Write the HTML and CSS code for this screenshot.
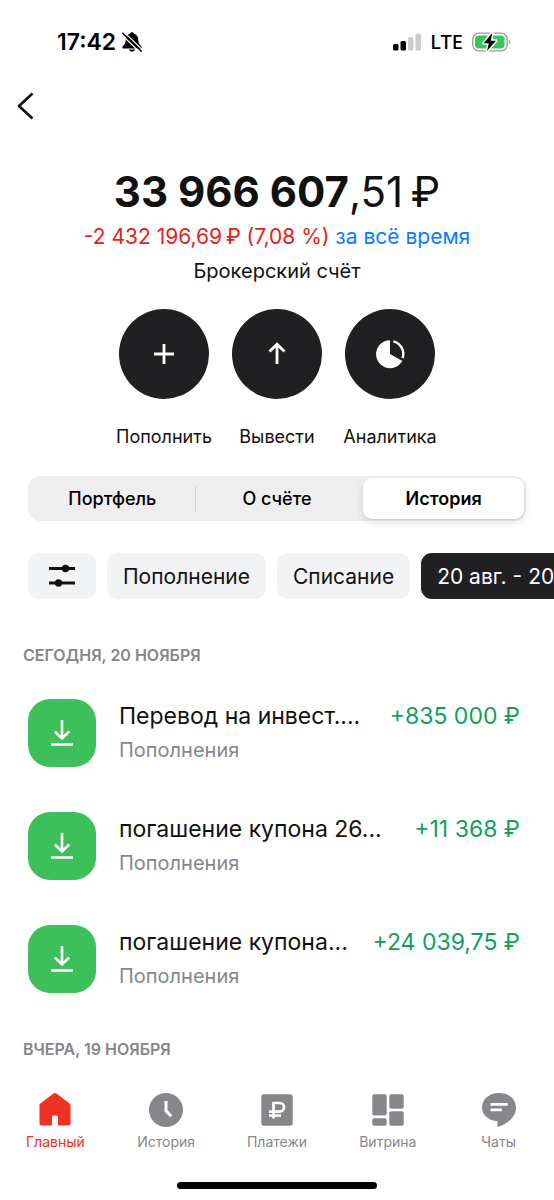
FILE: index.html
```html
<!DOCTYPE html>
<html lang="ru">
<head>
<meta charset="utf-8">
<meta name="viewport" content="width=device-width, initial-scale=1">
<title>Брокерский счёт</title>
<link rel="stylesheet" href="styles.css">
</head>
<body>
<div class="app">
  <div class="status">
    <div class="status-time">
      <span>17:42</span>
      <svg width="20" height="20" viewBox="0 0 20 20" aria-hidden="true">
        <path d="M10 .2c-1.100 0-1.900.6-2 1.500C5.300 2.500 3.800 4.700 3.700 7.500c-.1 3.300-.8 4.700-2.700 6.600-.9.900-1 2.400.3 2.400h17.400c1.300 0 1.200-1.500.3-2.400-1.900-1.900-2.600-3.300-2.700-6.600-.1-2.800-1.600-5-4.300-5.800C11.900.8 11.100.2 10 .2z"/>
        <path d="M7 17.500h6c-.4 1.400-1.500 2.200-3 2.200s-2.600-.8-3-2.200z"/>
        <path d="M-.6 2.500 18.200 20.500M2 .2 21 18.200" stroke="#fff" stroke-width="1.200"/>
        <path d="M.8 1.200 19.400 19.200" stroke="#000" stroke-width="1.500" stroke-linecap="round"/>
      </svg>
    </div>
    <div class="status-net">
      <svg width="28" height="18" viewBox="0 0 28 18" aria-hidden="true">
        <rect y="11" width="5.500" height="6.500" rx="1.500"/>
        <rect x="7.500" y="8" width="5.500" height="9.500" rx="1.500"/>
        <rect x="15" y="4" width="5.500" height="13.500" rx="1.500" fill="#ccc"/>
        <rect x="22.500" y="0.500" width="5.500" height="17" rx="1.500" fill="#ccc"/>
      </svg>
      <span class="carrier">LTE</span>
      <svg width="40" height="20" viewBox="0 0 40 20" aria-hidden="true">
        <rect x=".8" y="1.200" width="34.400" height="17.600" rx="6" fill="none" stroke="#999" stroke-width="1.300"/>
        <path d="M36.800 7.500c1.800.7 1.800 4.300 0 5z" fill="#999"/>
        <rect x="3" y="3.500" width="29.500" height="13" rx="4" fill="#34c759"/>
        <path d="M20.300 1 11.500 11.300h5.300L15 19l9-10.300h-5.300z" stroke="#fff" stroke-width="3" stroke-linejoin="round"/>
        <path d="M20.300 1 11.500 11.300h5.300L15 19l9-10.300h-5.300z"/>
      </svg>
    </div>
  </div>

  <header class="nav">
    <button class="back" type="button" aria-label="Назад">
      <svg width="20" height="28" viewBox="0 0 20 28" aria-hidden="true"><path d="M16.500 1.500 3 14l13.500 12.500" fill="none" stroke="#111" stroke-width="2.600" stroke-linejoin="round"/></svg>
    </button>
  </header>

  <main id="main">
    <section class="summary">
      <h1 class="balance"><strong>33 966 607</strong>,51&#8201;₽</h1>
      <p class="change"><span class="loss">-2 432 196,69&#8201;₽ (7,08 %)</span> <a class="period" href="#period">за всё время</a></p>
      <p class="account">Брокерский счёт</p>
    </section>

    <div class="actions">
      <button class="action" type="button">
        <span class="action-disc"><svg width="30" height="30" viewBox="0 0 30 30" aria-hidden="true"><path d="M15 5v20M5 15h20" stroke="#fff" stroke-width="2.800"/></svg></span>
        <span>Пополнить</span>
      </button>
      <button class="action" type="button">
        <span class="action-disc"><svg width="30" height="30" viewBox="0 0 30 30" aria-hidden="true"><path d="M15 25V5.500M7.500 12.500 15 5.300l7.500 7.200" fill="none" stroke="#fff" stroke-width="2.800"/></svg></span>
        <span>Вывести</span>
      </button>
      <button class="action" type="button">
        <span class="action-disc"><svg width="30" height="30" viewBox="0 0 30 30" aria-hidden="true"><path d="M15 1.200A14 14 0 1 0 27.300 22L15 15z" fill="#fff"/><path d="M18.300 2.300A13 13 0 0 1 27.600 19.200" fill="none" stroke="#fff" stroke-width="2.400"/></svg></span>
        <span>Аналитика</span>
      </button>
    </div>

    <div class="segments" role="tablist">
      <button class="segment" type="button" role="tab" aria-selected="false">Портфель</button>
      <button class="segment segment-divided" type="button" role="tab" aria-selected="false">О счёте</button>
      <button class="segment segment-active" type="button" role="tab" aria-selected="true">История</button>
    </div>

    <div class="chips">
      <button class="chip chip-icon" type="button" aria-label="Фильтры">
        <svg width="26" height="26" viewBox="0 0 26 26" aria-hidden="true"><path d="M0 5.500h26M0 20h26" stroke="#111" stroke-width="3"/><circle cx="16.500" cy="5.500" r="3.700" fill="#111"/><circle cx="9.500" cy="20" r="3.700" fill="#111"/></svg>
      </button>
      <button class="chip" type="button">Пополнение</button>
      <button class="chip" type="button">Списание</button>
      <button class="chip chip-dark" type="button">20 авг. - 20</button>
    </div>

    <section>
      <h2 class="day">СЕГОДНЯ, 20 НОЯБРЯ</h2>
      <ul class="operations">
        <li class="operation">
          <span class="op-icon"><svg width="24" height="28" viewBox="0 0 24 28" aria-hidden="true"><path d="M12 1v18M4.800 12.500 12 19.500l7.200-7M1 25.500h22" fill="none" stroke="#fff" stroke-width="2.600"/></svg></span>
          <div class="op-text">
            <div class="op-line"><span>Перевод на инвест....</span><span class="op-sum">+835 000 ₽</span></div>
            <div class="op-kind">Пополнения</div>
          </div>
        </li>
        <li class="operation">
          <span class="op-icon"><svg width="24" height="28" viewBox="0 0 24 28" aria-hidden="true"><path d="M12 1v18M4.800 12.500 12 19.500l7.200-7M1 25.500h22" fill="none" stroke="#fff" stroke-width="2.600"/></svg></span>
          <div class="op-text">
            <div class="op-line"><span>погашение купона 26...</span><span class="op-sum">+11 368 ₽</span></div>
            <div class="op-kind">Пополнения</div>
          </div>
        </li>
        <li class="operation">
          <span class="op-icon"><svg width="24" height="28" viewBox="0 0 24 28" aria-hidden="true"><path d="M12 1v18M4.800 12.500 12 19.500l7.200-7M1 25.500h22" fill="none" stroke="#fff" stroke-width="2.600"/></svg></span>
          <div class="op-text">
            <div class="op-line"><span>погашение купона...</span><span class="op-sum">+24 039,75 ₽</span></div>
            <div class="op-kind">Пополнения</div>
          </div>
        </li>
      </ul>
    </section>
    <section>
      <h2 class="day">ВЧЕРА, 19 НОЯБРЯ</h2>
    </section>
  </main>

  <footer class="bottom">
    <nav class="tabs">
      <a class="tab tab-active" href="#main">
        <svg width="36" height="36" viewBox="0 0 36 36" aria-hidden="true"><path d="M16.500 1.600a2.500 2.500 0 0 1 3 0L32.600 11.500a2 2 0 0 1 .9 1.700V31.500a2 2 0 0 1-2 2H21V25a1.500 1.500 0 0 0-1.500-1.500h-3A1.500 1.500 0 0 0 15 25v8.500H4.500a2 2 0 0 1-2-2V13.200a2 2 0 0 1 .9-1.700z"/></svg>
        <span>Главный</span>
      </a>
      <a class="tab" href="#history">
        <svg width="36" height="36" viewBox="0 0 36 36" aria-hidden="true"><circle cx="18" cy="18" r="17"/><path d="M18 9v9.800l5.300 5.400" fill="none" stroke="#fff" stroke-width="3"/></svg>
        <span>История</span>
      </a>
      <a class="tab" href="#payments">
        <svg width="36" height="36" viewBox="0 0 36 36" aria-hidden="true"><rect x="2.300" y="2.300" width="31.400" height="31.400" rx="2.500"/><path d="M14.500 26.500V11h6.200a4.300 4.300 0 0 1 0 8.600H10M10 23.500h12" fill="none" stroke="#fff" stroke-width="2.700"/></svg>
        <span>Платежи</span>
      </a>
      <a class="tab" href="#showcase">
        <svg width="36" height="36" viewBox="0 0 36 36" aria-hidden="true"><rect x="2.300" y="2.300" width="14.400" height="21.200" rx="2"/><rect x="2.300" y="26.300" width="14.400" height="7.400" rx="2"/><rect x="19.300" y="2.300" width="14.400" height="14.400" rx="2"/><rect x="19.300" y="19.300" width="14.400" height="14.400" rx="2"/></svg>
        <span>Витрина</span>
      </a>
      <a class="tab" href="#chats">
        <svg width="36" height="36" viewBox="0 0 36 36" aria-hidden="true"><path d="M18 1C8 1 1 7.200 1 15.500 1 23 7.500 28.600 16.500 29.300V35C28 31.500 35 24 35 15.500 35 7.200 28 1 18 1z"/><path d="M9.500 12.300h17.300M9.500 17.800h11.300" stroke="#fff" stroke-width="2.800"/></svg>
        <span>Чаты</span>
      </a>
    </nav>
    <div class="home-bar"></div>
  </footer>
</div>
</body>
</html>
```
FILE: styles.css
```css
* { box-sizing: border-box; }

body {
  margin: 0;
  background: #fff;
  color: #111;
  font-family: Inter, "Noto Sans", sans-serif;
  overflow-x: hidden;
}

button {
  border: 0;
  padding: 0;
  background: none;
  color: inherit;
  font: inherit;
}

a { text-decoration: none; }
h1, h2, p, ul { margin: 0; padding: 0; }
svg { display: block; flex: none; }

.app {
  display: flex;
  flex-direction: column;
  min-height: 100vh;
}

.status {
  display: flex;
  justify-content: space-between;
  align-items: center;
  height: 84px;
  padding: 0 42px 0 57px;
  color: #000;
}

.status-time {
  display: flex;
  align-items: center;
  gap: 6px;
  font-size: 23px;
  font-weight: 600;
}

.status-net {
  display: flex;
  align-items: center;
  gap: 9px;
}

.carrier {
  font-family: "Noto Sans", sans-serif;
  font-size: 20px;
  font-weight: 500;
  line-height: 20px;
}

.nav {
  display: flex;
  padding: 8px 16px;
}

.back { display: flex; }

.summary {
  display: flex;
  flex-direction: column;
  align-items: center;
  padding-top: 40px;
  text-align: center;
}

.balance {
  font-size: 42px;
  line-height: 48px;
  font-weight: 400;
}

.balance strong { font-weight: 700; }

.change {
  margin-top: 4px;
  font-size: 21px;
  line-height: 34px;
}

.loss { color: #e2231a; }
.period { color: #0a7cff; }

.account {
  font-size: 20px;
  line-height: 34px;
}

.actions {
  display: flex;
  justify-content: center;
  gap: 20px;
  padding-top: 21px;
}

.action {
  display: flex;
  flex-direction: column;
  align-items: center;
  gap: 27px;
  width: 93px;
  font-size: 18px;
  line-height: 22px;
  white-space: nowrap;
}

.action-disc {
  display: grid;
  place-items: center;
  width: 90px;
  height: 90px;
  border-radius: 50%;
  background: #202022;
}

.segments {
  display: grid;
  grid-template-columns: repeat(3, 1fr);
  margin: 28px 28px 0;
  padding: 2px;
  border-radius: 12px;
  background: #eee;
}

.segment {
  height: 41px;
  border-radius: 9px;
  color: #000;
  font-size: 18px;
  font-weight: 500;
}

.segment-divided {
  background: linear-gradient(#d4d4d6, #d4d4d6) left center / 1px 26px no-repeat;
}

.segment-active {
  margin-left: 4px;
  background: #fff;
  font-weight: 600;
  box-shadow: 0 3px 8px rgba(0, 0, 0, 0.12), 0 1px 2px rgba(0, 0, 0, 0.06);
}

.chips {
  display: flex;
  gap: 11px;
  padding: 32px 0 0 28px;
  overflow: hidden;
}

.chip {
  flex: none;
  display: flex;
  align-items: center;
  height: 46px;
  padding: 0 16px;
  border-radius: 11px;
  background: #f2f3f5;
  font-size: 21px;
}

.chip-icon { padding: 0 21px; }

.chip-dark {
  background: #202022;
  color: #fff;
}

.day {
  padding: 46px 23px 29px;
  color: #86868b;
  font-size: 16px;
  line-height: 20px;
  font-weight: 600;
}

.operations {
  display: flex;
  flex-direction: column;
  gap: 45px;
  padding: 5px 34px 0 28px;
  list-style: none;
}

.operation {
  display: flex;
  align-items: center;
  gap: 23px;
}

.op-icon {
  flex: none;
  display: grid;
  place-items: center;
  width: 68px;
  height: 68px;
  border-radius: 22px;
  background: #3dc05a;
}

.op-text {
  flex: 1;
  min-width: 0;
}

.op-line {
  display: flex;
  justify-content: space-between;
  font-size: 23px;
  line-height: 34px;
  white-space: nowrap;
}

.op-sum { color: #11a05c; }

.op-kind {
  color: #86868b;
  font-size: 20px;
  line-height: 34px;
}

.bottom {
  margin-top: auto;
  padding-bottom: 11px;
}

.tabs {
  display: grid;
  grid-template-columns: repeat(5, 1fr);
}

.tab {
  display: flex;
  flex-direction: column;
  align-items: center;
  gap: 4px;
  color: #86868b;
  font-size: 14px;
  line-height: 20px;
}

.tab svg { fill: currentColor; }
.tab-active { color: #ef3124; }

.home-bar {
  width: 36%;
  height: 7px;
  margin: 30px auto 0;
  border-radius: 4px;
  background: #000;
}
```
